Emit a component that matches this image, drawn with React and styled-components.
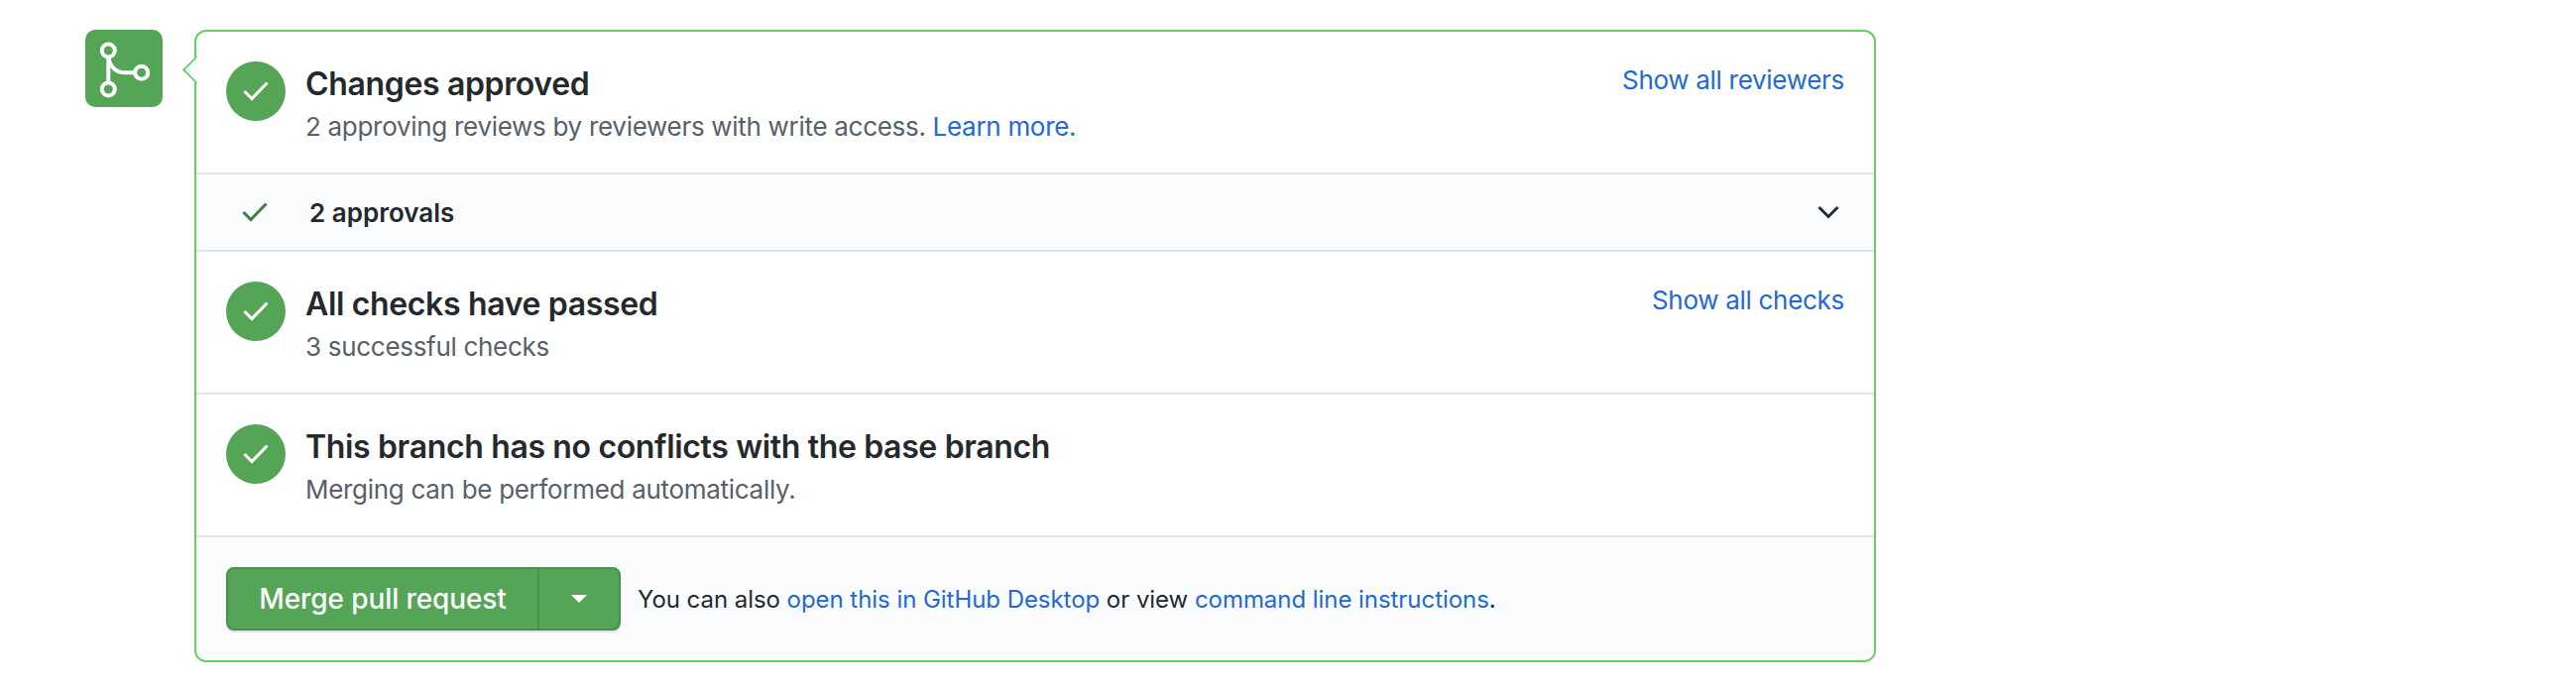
import React from 'react';
import styled, { createGlobalStyle } from 'styled-components';

const GlobalStyle = createGlobalStyle`
  body {
    margin: 0;
    background: #fff;
    font-family: Inter, "Liberation Sans", sans-serif;
    color: #24292e;
  }
`;

const Page = styled.div`
  display: flex;
  align-items: flex-start;
  gap: 32px;
  padding: 30px 0 0 86px;
`;

const MergeTile = styled.div`
  width: 78px;
  height: 78px;
  border-radius: 10px;
  background: #55a557;
  flex: none;
`;

const Box = styled.div`
  position: relative;
  width: 1696px;
  box-sizing: border-box;
  border: 2px solid #66cf63;
  border-radius: 12px;
  background: #fff;

  &::before {
    content: '';
    position: absolute;
    left: -10.5px;
    top: 27.5px;
    width: 21px;
    height: 21px;
    box-sizing: border-box;
    background: #fafbfc;
    border-left: 2px solid #66cf63;
    border-bottom: 2px solid #66cf63;
    transform: rotate(45deg);
    clip-path: polygon(0 0, 100% 100%, 0 100%);
  }
`;

const Section = styled.div`
  display: flex;
  align-items: flex-start;
  height: 144px;
  box-sizing: border-box;
  padding: 30px 30px 0;
  border-bottom: 2px solid #e1e4e8;
`;

const StatusCircle = styled.div`
  width: 60px;
  height: 60px;
  border-radius: 50%;
  background: #55a557;
  flex: none;
  display: flex;
  align-items: center;
  justify-content: center;
  margin-right: 20px;
`;

const SectionBody = styled.div`
  flex: 1;
  padding-top: 3px;
`;

const Title = styled.div`
  font-size: 32px;
  font-weight: 600;
  line-height: 40px;
  color: #24292e;
  letter-spacing: -0.35px;
`;

const Sub = styled.div`
  margin-top: 5px;
  font-size: 26px;
  line-height: 36px;
  letter-spacing: -0.3px;
  color: #586069;
`;

const Link = styled.a`
  color: #2269d3;
  text-decoration: none;
`;

const SideLink = styled(Link)`
  font-size: 26px;
  line-height: 36px;
  letter-spacing: -0.3px;
  margin-top: 1px;
`;

const ApprovalRow = styled.div`
  display: flex;
  align-items: center;
  height: 78px;
  box-sizing: border-box;
  padding: 0 35px 0 46px;
  background: #fafbfc;
  border-bottom: 2px solid #e1e4e8;
`;

const ApprovalText = styled.div`
  flex: 1;
  margin-left: 42px;
  font-size: 26px;
  font-weight: 600;
  color: #24292e;
`;

const Footer = styled.div`
  display: flex;
  align-items: center;
  height: 124px;
  padding: 0 30px;
  background: #fafbfc;
  border-radius: 0 0 10px 10px;
`;

const MergeGroup = styled.div`
  display: flex;
  height: 64px;
  box-sizing: border-box;
  border: 2px solid #4b8f50;
  border-radius: 8px;
  background: #55a557;
  box-shadow: 0 2px 0 rgba(27, 31, 35, 0.1);
  color: #fff;
  margin-right: 17px;
`;

const MergeButton = styled.div`
  width: 314px;
  box-sizing: border-box;
  display: flex;
  align-items: center;
  justify-content: center;
  font-size: 28px;
  font-weight: 500;
  letter-spacing: -0.1px;
  border-right: 2px solid #4b8f50;
`;

const DropButton = styled.div`
  width: 80px;
  display: flex;
  align-items: center;
  justify-content: center;
`;

const FooterText = styled.div`
  font-size: 24px;
  letter-spacing: -0.05px;
  color: #24292e;
`;

const Check = ({ color = '#fff', width = 3 }) => (
  <svg width="26" height="20" viewBox="0 0 26 20" fill="none">
    <path d="M1.5 10 L9 17.5 L24.5 1.5" stroke={color} strokeWidth={width} />
  </svg>
);

function StatusSection({ title, sub, link }) {
  return (
    <Section>
      <StatusCircle>
        <Check />
      </StatusCircle>
      <SectionBody>
        <Title>{title}</Title>
        <Sub>{sub}</Sub>
      </SectionBody>
      {link && <SideLink>{link}</SideLink>}
    </Section>
  );
}

export default function App() {
  return (
    <>
      <GlobalStyle />
      <Page>
        <MergeTile>
          <svg width="78" height="78" viewBox="0 0 78 78" fill="none" stroke="#fff" strokeWidth="4">
            <circle cx="23.3" cy="21" r="6.5" />
            <circle cx="23.3" cy="60" r="6.5" />
            <circle cx="56.7" cy="43.3" r="6.5" />
            <path d="M23.3 27.5 V53.5" />
            <path d="M23.3 28 C25 38 32 43.3 40 43.3 H50.2" />
          </svg>
        </MergeTile>
        <Box>
          <StatusSection
            title="Changes approved"
            sub={
              <>
                2 approving reviews by reviewers with write access. <Link>Learn more.</Link>
              </>
            }
            link="Show all reviewers"
          />
          <ApprovalRow>
            <Check color="#3b8140" />
            <ApprovalText>2 approvals</ApprovalText>
            <svg width="22" height="14" viewBox="0 0 22 14" fill="none">
              <path d="M1.5 2 L11 11.5 L20.5 2" stroke="#24292e" strokeWidth="3" />
            </svg>
          </ApprovalRow>
          <StatusSection title="All checks have passed" sub="3 successful checks" link="Show all checks" />
          <StatusSection
            title="This branch has no conflicts with the base branch"
            sub="Merging can be performed automatically."
          />
          <Footer>
            <MergeGroup>
              <MergeButton>Merge pull request</MergeButton>
              <DropButton>
                <svg width="16" height="8" viewBox="0 0 16 8">
                  <path d="M0 0 H16 L8 8 Z" fill="#fff" />
                </svg>
              </DropButton>
            </MergeGroup>
            <FooterText>
              You can also <Link>open this in GitHub Desktop</Link> or view{' '}
              <Link>command line instructions</Link>.
            </FooterText>
          </Footer>
        </Box>
      </Page>
    </>
  );
}
